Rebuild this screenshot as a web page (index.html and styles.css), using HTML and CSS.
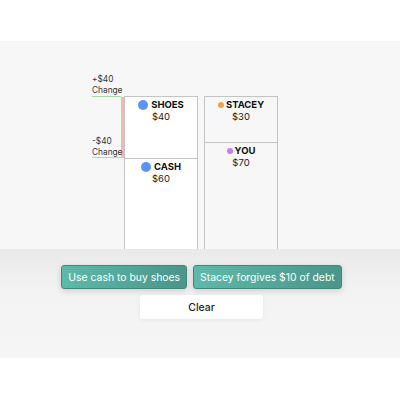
FILE: index.html
```html
<!DOCTYPE html>
<html lang="en">
<head>
    <meta charset="UTF-8" />
    <meta name="viewport" content="width=device-width, initial-scale=1.0" />
    <title>Balance sheet</title>
    <link rel="stylesheet" href="styles.css">
</head>
<body>
    <div class="stage">
        <div class="chart">
            <div class="deltas">
                <div class="delta delta-up">+$40<br>Change</div>
                <div class="delta delta-down">-$40<br>Change</div>
            </div>

            <div class="column assets">
                <div class="cell cell-shoes">
                    <div class="name"><span class="dot dot-big dot-blue"></span>SHOES</div>
                    <div class="amount">$40</div>
                </div>
                <div class="cell cell-cash">
                    <div class="name"><span class="dot dot-big dot-blue"></span>CASH</div>
                    <div class="amount">$60</div>
                </div>
            </div>

            <div class="column claims">
                <div class="cell cell-stacey">
                    <div class="name"><span class="dot dot-orange"></span>STACEY</div>
                    <div class="amount">$30</div>
                </div>
                <div class="cell cell-you">
                    <div class="name"><span class="dot dot-purple"></span>YOU</div>
                    <div class="amount">$70</div>
                </div>
            </div>
        </div>

        <div class="controls">
            <div class="actions">
                <button class="btn btn-teal">Use cash to buy shoes</button>
                <button class="btn btn-teal">Stacey forgives $10 of debt</button>
            </div>
            <button class="btn btn-clear">Clear</button>
        </div>
    </div>
</body>
</html>
```

FILE: styles.css
```css
html, body {
    margin: 0;
    padding: 0;
}

body {
    background: #fff;
    font-family: Inter, "Liberation Sans", sans-serif;
    color: #1f1f1f;
}

.stage {
    margin-top: 41px;
    height: 317px;
    background: #f7f7f7;
    display: flex;
    flex-direction: column;
}

.chart {
    height: 175px;
    padding: 33px 0 0 92px;
    display: flex;
    align-items: flex-start;
}

/* change markers on the left */
.deltas {
    width: 32px;
    display: flex;
    flex-direction: column;
}

.delta {
    font-size: 8.3px;
    line-height: 10.5px;
    color: #333;
}

.delta-up {
    height: 22px;
    border-bottom: 1px solid #a9d79f;
    margin-right: 3px;
}

.delta-down {
    height: 60px;
    display: flex;
    flex-direction: column;
    justify-content: flex-end;
    border-bottom: 1px solid #f3b7b7;
    border-right: 3px solid #f3b7b7;
}

.column {
    width: 72px;
    height: 152px;
    margin-top: 22px;
    border: 1px solid #c4c4c4;
    display: flex;
    flex-direction: column;
}

.assets {
    background: #fff;
}

.claims {
    margin-left: 6px;
    background: #f7f7f7;
}

.cell {
    padding-top: 2px;
    text-align: center;
}

.cell-shoes {
    height: 59px;
    border-bottom: 1px solid #c4c4c4;
}

.cell-stacey {
    height: 43px;
    border-bottom: 1px solid #c4c4c4;
}

.name {
    display: flex;
    align-items: center;
    justify-content: center;
    font-size: 9.5px;
    font-weight: 700;
    line-height: 12px;
    color: #111;
}

.amount {
    font-size: 9.5px;
    line-height: 12px;
    color: #222;
}

.dot {
    width: 6px;
    height: 6px;
    border-radius: 50%;
    margin-right: 2px;
}

.dot-big {
    width: 10px;
    height: 10px;
    margin-right: 3px;
}

.dot-blue {
    background: #5b94f8;
}

.dot-orange {
    background: #f6a14a;
}

.dot-purple {
    background: #c97cf2;
}

/* buttons */
.controls {
    flex: 1;
    padding-top: 16px;
    display: flex;
    flex-direction: column;
    align-items: center;
    gap: 6px;
    background: linear-gradient(#e9e9e9, #f2f2f2 35%, #f6f6f6);
}

.actions {
    display: flex;
    gap: 6px;
    margin-left: 3px;
}

.btn {
    height: 24px;
    font-family: inherit;
    font-size: 10.4px;
    border-radius: 3px;
    cursor: pointer;
}

.btn-teal {
    padding: 0 6px;
    color: #fff;
    background: linear-gradient(to right, #5dbaa9, #4b9589);
    border: 1px solid #41887c;
    box-shadow: 0 2px 6px rgba(0, 0, 0, 0.15);
}

.btn-clear {
    width: 123px;
    margin-left: 3px;
    color: #222;
    font-weight: 500;
    background: #fff;
    border: none;
    box-shadow: 0 1px 4px rgba(0, 0, 0, 0.06);
}
```
